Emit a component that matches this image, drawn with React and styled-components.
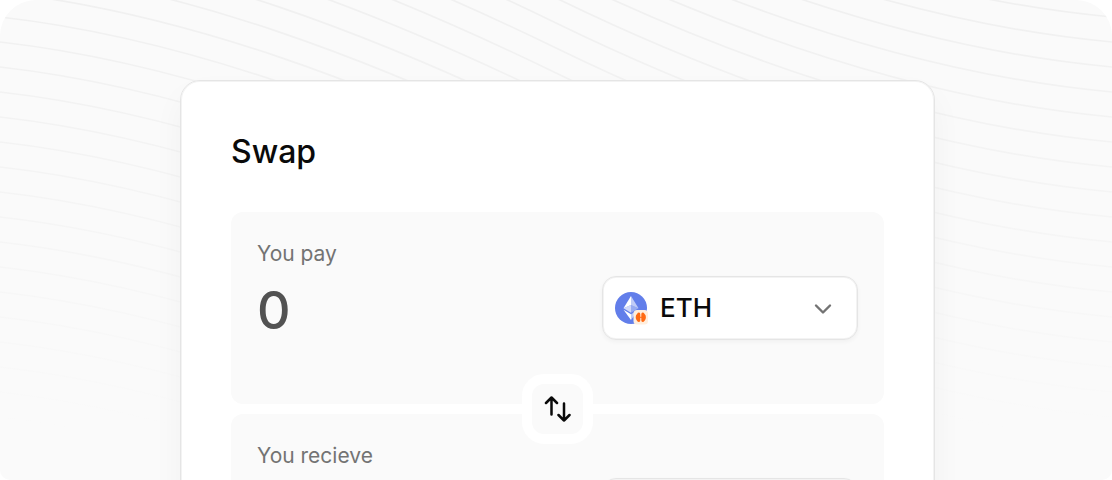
import React, { useState } from "react";
import styled, { createGlobalStyle } from "styled-components";

const GlobalStyle = createGlobalStyle`
  *, *::before, *::after { box-sizing: border-box; }
  body {
    margin: 0;
    background: #ffffff;
    font-family: Inter, "Liberation Sans", sans-serif;
    overflow: hidden;
  }
`;

const Stage = styled.main`
  display: grid;
  grid-template: minmax(0, 1fr) / minmax(0, 1fr);
  height: 100vh;
  overflow: hidden;
  background: #fafafa;
  border-radius: 36px 36px 10px 10px;
`;

const Backdrop = styled.svg`
  grid-area: 1 / 1;
  width: 100%;
  height: 480px;
`;

const Content = styled.div`
  grid-area: 1 / 1;
  padding: 80px 24px 0 27px;
`;

const Card = styled.form`
  max-width: 755px;
  margin: 0 auto;
  padding: 49px 50px;
  background: #ffffff;
  border: 1px solid #e5e5e5;
  border-radius: 20px;
  box-shadow: inset 0 0 0 1px #f3f3f3, 0 16px 32px rgba(0, 0, 0, 0.04);
`;

const Title = styled.h1`
  margin: 0 0 38px;
  font-size: 32px;
  line-height: 44px;
  font-weight: 500;
  color: #0a0a0a;
`;

const Panel = styled.section`
  min-height: 192px;
  padding: 26px;
  background: #fafafa;
  border-radius: 12px;
`;

const FieldLabel = styled.label`
  display: block;
  margin-bottom: 6px;
  font-size: 21px;
  line-height: 32px;
  color: #737373;
`;

const FieldRow = styled.div`
  display: flex;
  align-items: center;
  justify-content: space-between;
  gap: 24px;
`;

const AmountInput = styled.input`
  flex: 1;
  min-width: 0;
  height: 64px;
  padding: 4px 0 0;
  border: 0;
  outline: 0;
  background: transparent;
  font: 500 52px/60px Inter, "Liberation Sans", sans-serif;
  color: #525252;
`;

const TokenField = styled.div`
  display: flex;
  align-items: center;
  gap: 12px;
  width: 256px;
  height: 64px;
  padding: 0 25px 0 11px;
  background: #ffffff;
  border: 1px solid #e5e5e5;
  border-radius: 14px;
  box-shadow: inset 0 0 0 1px #f3f3f3, 0 2px 4px rgba(0, 0, 0, 0.04);
`;

const TokenSelect = styled.select`
  flex: 1;
  min-width: 0;
  height: 60px;
  padding: 0;
  border: 0;
  outline: 0;
  appearance: none;
  background: transparent;
  font: 500 26px/60px Inter, "Liberation Sans", sans-serif;
  color: #0a0a0a;
`;

const Divider = styled.div`
  display: flex;
  align-items: center;
  justify-content: center;
  height: 10px;
`;

const SwitchButton = styled.button`
  position: relative;
  z-index: 1;
  display: grid;
  place-items: center;
  flex: none;
  width: 71px;
  height: 70px;
  padding: 0;
  border: 10px solid #ffffff;
  border-radius: 22px;
  background: #fafafa;
  color: #0a0a0a;
`;

const WAVE_SPACING = 25;
const waves = Array.from({ length: 36 }, (_, i) => {
  const y = -358 + i * WAVE_SPACING;
  return `M0 ${y}C185 ${y + 21} 371 ${y + 91} 556 ${y + 181}C741 ${y + 271} 927 ${y + 333} 1112 ${y + 350}`;
});

function Waves() {
  return (
    <Backdrop viewBox="0 0 1112 480" preserveAspectRatio="none" aria-hidden="true">
      <defs>
        <linearGradient id="fade" gradientUnits="userSpaceOnUse" x1="0" y1="0" x2="0" y2="430">
          <stop offset="0" stopColor="#f0f0f0" />
          <stop offset="1" stopColor="#f0f0f0" stopOpacity="0" />
        </linearGradient>
      </defs>
      <g fill="none" stroke="url(#fade)" strokeWidth="1.700">
        {waves.map((d) => (
          <path key={d} d={d} />
        ))}
      </g>
    </Backdrop>
  );
}

function EthIcon() {
  return (
    <svg width="34" height="34" viewBox="0 0 34 34" aria-hidden="true">
      <circle cx="17" cy="17" r="16" fill="#627eea" />
      <path d="M17 5v9l7.5 3.3z" fill="#fff" fillOpacity=".6" />
      <path d="M17 5 9.500 17.300 17 14z" fill="#fff" />
      <path d="M17 14v7.700l7.500-4.400z" fill="#fff" fillOpacity=".35" />
      <path d="M9.500 17.300 17 21.700V14z" fill="#fff" fillOpacity=".7" />
      <path d="M17 23.200V29l7.500-10.200z" fill="#fff" fillOpacity=".6" />
      <path d="M17 29v-5.800l-7.500-4.400z" fill="#fff" />
      <rect x="19.500" y="19" width="14.500" height="14.500" rx="3.500" fill="#ffeedd" />
      <path d="M25 21.600q1.300 0 1.300 1.800v5.800q0 1.800-1.300 1.800-1.200 0-2-1.300-1.300-.8-1.300-3.400t1.300-3.400q.8-1.300 2-1.300z" fill="#ff6a13" />
      <path d="M28.600 21.600q-1.300 0-1.300 1.800v5.800q0 1.800 1.300 1.800 1.200 0 2-1.300 1.300-.8 1.300-3.400t-1.300-3.400q-.8-1.300-2-1.300z" fill="#ff6a13" />
      <path d="M24.500 26.300h4.600" stroke="#ff6a13" strokeWidth="1" />
    </svg>
  );
}

function Chevron() {
  return (
    <svg width="18" height="14" viewBox="0 0 18 14" fill="none" stroke="#737373" strokeWidth="2.400" strokeLinecap="round" strokeLinejoin="round" aria-hidden="true">
      <path d="M2 4.500l7 7 7-7" />
    </svg>
  );
}

function SwitchIcon() {
  return (
    <svg width="27" height="28" viewBox="0 0 27 28" fill="none" stroke="currentColor" strokeWidth="2.500" strokeLinecap="round" strokeLinejoin="round" aria-hidden="true">
      <path d="M7.500 19.500V2.500M2 8l5.500-5.500L13 8M20 8.500v17M14.500 20l5.500 5.500 5.500-5.500" />
    </svg>
  );
}

function SwapPanel({ id, label, amount, onAmount, token, onToken }) {
  return (
    <Panel>
      <FieldLabel htmlFor={id}>{label}</FieldLabel>
      <FieldRow>
        <AmountInput id={id} inputMode="decimal" value={amount} onChange={(e) => onAmount(e.target.value)} />
        <TokenField>
          <EthIcon />
          <TokenSelect aria-label={`${label} token`} value={token} onChange={(e) => onToken(e.target.value)}>
            <option>ETH</option>
          </TokenSelect>
          <Chevron />
        </TokenField>
      </FieldRow>
    </Panel>
  );
}

export default function App() {
  const [pay, setPay] = useState({ amount: "0", token: "ETH" });
  const [receive, setReceive] = useState({ amount: "0", token: "ETH" });
  const swap = () => {
    setPay(receive);
    setReceive(pay);
  };
  return (
    <>
      <GlobalStyle />
      <Stage>
        <Waves />
        <Content>
          <Card>
            <Title>Swap</Title>
            <SwapPanel
              id="pay"
              label="You pay"
              amount={pay.amount}
              token={pay.token}
              onAmount={(amount) => setPay({ ...pay, amount })}
              onToken={(token) => setPay({ ...pay, token })}
            />
            <Divider>
              <SwitchButton type="button" aria-label="Switch tokens" onClick={swap}>
                <SwitchIcon />
              </SwitchButton>
            </Divider>
            <SwapPanel
              id="receive"
              label="You recieve"
              amount={receive.amount}
              token={receive.token}
              onAmount={(amount) => setReceive({ ...receive, amount })}
              onToken={(token) => setReceive({ ...receive, token })}
            />
          </Card>
        </Content>
      </Stage>
    </>
  );
}
